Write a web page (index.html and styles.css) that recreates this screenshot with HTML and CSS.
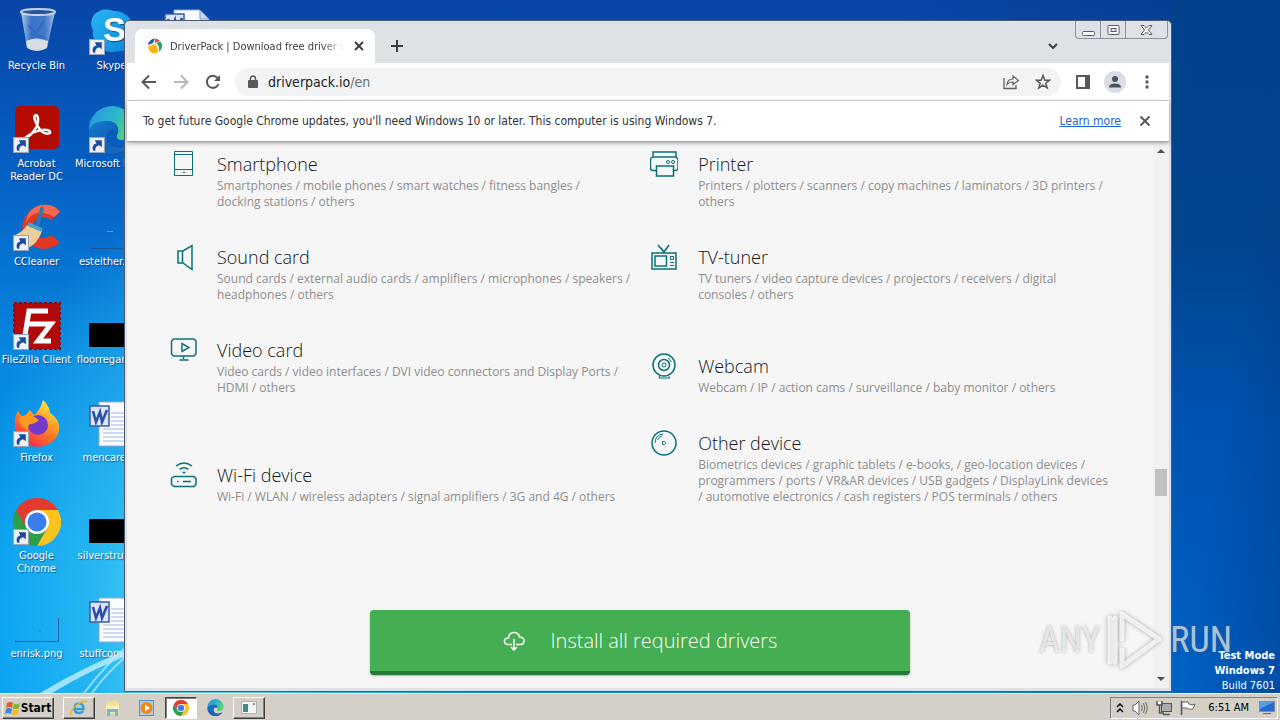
FILE: index.html
```html
<!DOCTYPE html>
<html lang="en">
<head>
    <meta charset="UTF-8">
    <meta name="viewport" content="width=device-width, initial-scale=1.0">
    <title>DriverPack | Download free driver updates</title>
    <link rel="stylesheet" href="styles.css">
</head>
<body>
    <!-- shared icon parts -->
    <svg class="defs" width="0" height="0" aria-hidden="true">
        <defs>
            <linearGradient id="g-bin" x1="0" x2="1" y1="0" y2="0"><stop offset="0" stop-color="#c4d8ee" stop-opacity=".95"/><stop offset=".3" stop-color="#4f86d4" stop-opacity=".7"/><stop offset=".7" stop-color="#5a8cd6" stop-opacity=".7"/><stop offset="1" stop-color="#b9cfea" stop-opacity=".9"/></linearGradient>
            <linearGradient id="g-skype" x1="0" x2="1" y1="0" y2="1"><stop offset="0" stop-color="#2ab6f2"/><stop offset="1" stop-color="#0a84dc"/></linearGradient>
            <linearGradient id="g-edge" x1="0" x2="1" y1=".2" y2=".6"><stop offset="0" stop-color="#2a94dc"/><stop offset=".5" stop-color="#2ab5d0"/><stop offset="1" stop-color="#5fd866"/></linearGradient>
            <linearGradient id="g-edge2" x1="0" x2="1" y1="0" y2="1"><stop offset="0" stop-color="#1478d2"/><stop offset="1" stop-color="#0f4f9c"/></linearGradient>
            <linearGradient id="g-fox" x1=".8" x2=".2" y1="0" y2="1"><stop offset="0" stop-color="#fff04a"/><stop offset=".4" stop-color="#ff9a22"/><stop offset=".75" stop-color="#ff5136"/><stop offset="1" stop-color="#e51b60"/></linearGradient>
            <symbol id="shortcut" viewBox="0 0 15 15">
                <rect x=".5" y=".5" width="14" height="14" fill="#eef2f8" stroke="#9aa6b8"/>
                <path d="M4 13C2.500 9 4 6.500 7 6L5.500 3H12V9.500L9.500 7.800C7 8.500 5.500 10 6 13Z" fill="#1c4a9c"/>
            </symbol>
            <symbol id="chrome" viewBox="0 0 48 48">
                <path d="M24 24L3.200 12A24 24 0 0 1 44.800 12Z" fill="#e33b2e"/>
                <path d="M24 12H44.800A24 24 0 0 1 24 48L34 30Z" fill="#fcc31e"/>
                <path d="M3.200 12A24 24 0 0 0 24 48L34.400 30L13.600 30Z" fill="#2d9f46"/>
                <path d="M3.200 12L13.600 30L24 24L24 12Z" fill="#e33b2e"/>
                <circle cx="24" cy="24" r="12" fill="#fff"/>
                <circle cx="24" cy="24" r="9.500" fill="#3b7ded"/>
            </symbol>
            <symbol id="edge" viewBox="0 0 48 48">
                <path d="M1 24A23 23 0 0 1 47 22C47 31 41 34 34 34C28 34 28 30 30 27C32 20 26 15 19 15C10 15 4 18 1 24Z" fill="url(#g-edge)"/>
                <path d="M1 24C4 17 12 15 19 15C27 15 31 20 30 26C26 22 18 24 18 31C18 38 26 43 37 41C40 40 43 38 44 37A23 23 0 0 1 1 24Z" fill="url(#g-edge2)"/>
                <path d="M14 46C6 36 12 22 24 23C17 25 16 34 22 39C28 43 38 42 44 37C38 47 25 50 14 46Z" fill="#1767b8"/>
            </symbol>
            <symbol id="word" viewBox="0 0 48 48">
                <path d="M11 2H37L46 11V46H11Z" fill="#fafcff" stroke="#93a7d6"/>
                <path d="M37 2V11H46Z" fill="#cfdcf5" stroke="#7690cc"/>
                <path d="M23 13H42M23 17H42M23 21H42M23 25H42M15 29H42M15 33H42M15 37H42M15 41H42" stroke="#a3b5e3"/>
                <rect x="2" y="6" width="19" height="20" fill="#dbe5f8" stroke="#3658a8" stroke-width="1.500"/>
                <path d="M5 11L8 22L12 12L14 22L19 10" fill="none" stroke="#2b50a6" stroke-width="2.600"/>
            </symbol>
        </defs>
    </svg>

    <main class="desktop">
        <svg class="beams" width="140" height="60" viewBox="0 0 140 60" aria-hidden="true"><path d="M40 60Q90 30 140 12L140 18Q95 34 52 60Z" fill="#c8f4ff" opacity=".75"/><path d="M84 60Q104 34 126 14M92 60Q108 38 128 22" fill="none" stroke="#b8f0ff" stroke-width="2" opacity=".7"/></svg>
        <div class="desktop-icons">
            <a class="shortcut" href="#">
                <svg viewBox="0 0 48 48"><path d="M8 4L14 40Q23 46 34 40L42 4Z" fill="url(#g-bin)"/><path d="M13 33Q23 28 35 33L34 40Q24 46 14 40Z" fill="#e9e7e6" opacity=".9"/><path d="M15 17L23 25L31 13M18 26L32 30" fill="none" stroke="#2a61bb" stroke-width="2" opacity=".6"/><ellipse cx="25" cy="4" rx="17" ry="3" fill="#27559e" stroke="#c6d3e4" stroke-width="2"/></svg>
                <span>Recycle Bin</span>
            </a>
            <a class="shortcut" href="#">
                <svg viewBox="0 0 48 48"><rect x="2" y="0" width="44" height="43" rx="5" fill="#b30b00"/><path d="M12 32C20 29 26 19 25 12C24 7 20 9 22 14C25 23 31 30 37 27C38 22 24 22 12 32Z" fill="none" stroke="#fff" stroke-width="2.500"/><use href="#shortcut" x="0" y="31" width="16" height="16"/></svg>
                <span>Acrobat<br>Reader DC</span>
            </a>
            <a class="shortcut" href="#">
                <svg viewBox="0 0 48 48"><path d="M47 8L38 16C28 9 19 16 20 24C21 34 31 37 38 31L47 38C38 48 20 47 12 35C4 18 16 2 30 1C38 0 43 3 47 8Z" fill="#df3926"/><path d="M47 8L41 13C28 5 16 9 13 20C13 8 22 1 30 1C38 0 43 3 47 8Z" fill="#f26a50"/><path d="M29 5L24 22" stroke="#2b79b9" stroke-width="4" stroke-linecap="round"/><path d="M14 21L29 27C26 36 20 43 12 45L2 31Q10 28 14 21Z" fill="#edcd98"/><path d="M15 20L29 26" stroke="#4da0ce" stroke-width="4"/><use href="#shortcut" x="0" y="31" width="16" height="16"/></svg>
                <span>CCleaner</span>
            </a>
            <a class="shortcut" href="#">
                <svg viewBox="0 0 48 48"><rect x="1" y="1" width="46" height="46" fill="#b20a0a" stroke="#90060a" stroke-width="2" stroke-dasharray="3 2"/><path d="M11 39L16 9H35M14 22H29M25 22H38L25 39H38" fill="none" stroke="#fff" stroke-width="5"/><use href="#shortcut" x="0" y="32" width="16" height="16"/></svg>
                <span>FileZilla Client</span>
            </a>
            <a class="shortcut" href="#">
                <svg viewBox="0 0 48 48"><path d="M5 11L10 18L17 10L21 15Q27 11 30 0C35 5 37 9 37 13C47 19 49 30 42 39C32 50 14 49 6 38C0 28 1 18 5 11Z" fill="url(#g-fox)"/><circle cx="25" cy="25" r="10" fill="#733ac9"/><path d="M6 18C12 13 19 15 23 18L26 20Q22 24 17 24Q14 26 15 30C10 28 6 24 6 18Z" fill="#ff9a20"/><use href="#shortcut" x="0" y="31" width="16" height="16"/></svg>
                <span>Firefox</span>
            </a>
            <a class="shortcut" href="#">
                <svg viewBox="0 0 48 48"><use href="#chrome"/><use href="#shortcut" x="0" y="31" width="16" height="16"/></svg>
                <span>Google<br>Chrome</span>
            </a>
            <a class="shortcut" href="#">
                <svg viewBox="0 0 48 48"><path d="M2 45.500H45.500V22" fill="none" stroke="#1a62a0"/><path d="M26 35H28" stroke="#287cc0"/></svg>
                <span>enrisk.png</span>
            </a>

            <a class="shortcut" href="#">
                <svg viewBox="0 0 48 48"><path d="M6 7C12 0 21 1 26 3C38 3 47 13 46 25C48 35 42 44 31 43C15 48 3 34 5 22C2 17 3 11 6 7Z" fill="url(#g-skype)"/><text class="skype-s" x="15" y="33">S</text><use href="#shortcut" x="1" y="31" width="16" height="16"/></svg>
                <span>Skype</span>
            </a>
            <a class="shortcut" href="#">
                <svg viewBox="0 0 48 48"><use href="#edge"/><use href="#shortcut" x="1" y="31" width="16" height="16"/></svg>
                <span>Microsoft Edge</span>
            </a>
            <a class="shortcut" href="#">
                <svg viewBox="0 0 48 48"><path d="M3 44.500H48" stroke="#155797"/><path d="M19 27.500H25" stroke="#4fa0e0"/></svg>
                <span>esteither.png</span>
            </a>
            <a class="shortcut" href="#">
                <svg viewBox="0 0 48 48"><path d="M1 21H48V45H1Z" fill="#000"/></svg>
                <span>floorregar.png</span>
            </a>
            <a class="shortcut" href="#">
                <svg viewBox="0 0 48 48"><use href="#word"/></svg>
                <span>mencare.rtf</span>
            </a>
            <a class="shortcut" href="#">
                <svg viewBox="0 0 48 48"><path d="M1 21H48V45H1Z" fill="#000"/></svg>
                <span>silverstru.png</span>
            </a>
            <a class="shortcut" href="#">
                <svg viewBox="0 0 48 48"><use href="#word"/></svg>
                <span>stuffcomp.rtf</span>
            </a>

            <a class="shortcut" href="#" aria-label="Document">
                <svg viewBox="0 0 48 48"><use href="#word"/></svg>
            </a>
        </div>

        <div class="build-info">
            <strong>Test Mode</strong>
            <strong>Windows 7</strong>
            <span>Build 7601</span>
        </div>

        <section class="window">
            <header class="tab-strip">
                <div class="tab">
                    <svg width="16" height="16" viewBox="0 0 16 16"><path d="M1 7A7.500 7.500 0 0 1 8 .5L6 5Z" fill="#1e58a8"/><path d="M8.500 .5A7.500 7.500 0 0 1 13 3L7.500 5Z" fill="#e4483a"/><path d="M13.500 3.500A7.500 7.500 0 0 1 12 14Q13 8 9 5Z" fill="#27a560"/><path d="M1 8.500L7 6Q12 9 11 14.500Q3 18 1 8.500Z" fill="#fbb615"/></svg>
                    <span class="tab-title">DriverPack | Download free driver updates</span>
                    <button class="tab-close" aria-label="Close tab"><svg width="10" height="10" viewBox="0 0 10 10"><path d="M1 1L9 9M9 1L1 9" stroke="#3c4043" stroke-width="2"/></svg></button>
                </div>
                <button class="new-tab" aria-label="New tab"><svg width="12" height="12" viewBox="0 0 12 12"><path d="M6 0V12M0 6H12" stroke="#3c4043" stroke-width="2"/></svg></button>
                <button class="tab-search" aria-label="Search tabs"><svg width="10" height="6" viewBox="0 0 10 6"><path d="M1 1L5 5L9 1" fill="none" stroke="#3c4043" stroke-width="2"/></svg></button>
                <div class="window-controls">
                    <button aria-label="Minimize"><svg width="13" height="12" viewBox="0 0 13 12"><rect x=".5" y="7.500" width="12" height="4" rx="1" fill="#fff" stroke="#555b66"/></svg></button>
                    <button aria-label="Restore"><svg width="13" height="12" viewBox="0 0 13 12"><rect x="1" y="1.500" width="11" height="9" rx="1" fill="#fff" stroke="#555b66"/><rect x="4" y="4.500" width="5" height="3" fill="#dee1e6" stroke="#555b66"/></svg></button>
                    <button class="close" aria-label="Close"><svg width="13" height="12" viewBox="0 0 13 12"><path d="M1 1.500H4L6.500 4L9 1.500H12L8.500 6L12 10.500H9L6.500 8L4 10.500H1L4.500 6Z" fill="#fff" stroke="#555b66"/></svg></button>
                </div>
            </header>

            <div class="toolbar">
                <button class="tool" aria-label="Back"><svg width="16" height="16" viewBox="0 0 16 16"><path d="M15 8H2M8 1.500L1.500 8L8 14.500" fill="none" stroke="#55585c" stroke-width="2"/></svg></button>
                <button class="tool" aria-label="Forward"><svg width="16" height="16" viewBox="0 0 16 16"><path d="M1 8H14M8 1.500L14.500 8L8 14.500" fill="none" stroke="#b6b8bb" stroke-width="2"/></svg></button>
                <button class="tool" aria-label="Reload"><svg width="16" height="16" viewBox="0 0 16 16"><path d="M13.500 10A6 6 0 1 1 12.500 4" fill="none" stroke="#55585c" stroke-width="2"/><path d="M15 1V7H9Z" fill="#55585c"/></svg></button>
                <div class="address">
                    <svg width="10" height="14" viewBox="0 0 10 14"><rect x="0" y="5" width="10" height="8" rx="1" fill="#55585c"/><path d="M2.500 6V3.500A2.500 2.500 0 0 1 7.500 3.500V6" fill="none" stroke="#55585c" stroke-width="1.500"/></svg>
                    <a class="url" href="#">driverpack.io<span>/en</span></a>
                    <button class="tool" aria-label="Share"><svg width="16" height="16" viewBox="0 0 16 16"><path d="M1 4V14.500H13V11" fill="none" stroke="#5f6368" stroke-width="1.300"/><path d="M4 10.500Q4.500 5 10 5V2L15.500 6.500L10 10.500V8Q6 8 4 10.500Z" fill="none" stroke="#5f6368" stroke-width="1.200"/></svg></button>
                    <button class="tool" aria-label="Bookmark"><svg width="16" height="16" viewBox="0 0 16 16"><path d="M8 1.500L9.800 6.200H14.500L10.800 9.200L12.200 14L8 11.200L3.800 14L5.200 9.200L1.500 6.200H6.200Z" fill="none" stroke="#55585c" stroke-width="1.500"/></svg></button>
                </div>
                <button class="tool" aria-label="Side panel"><svg width="14" height="14" viewBox="0 0 14 14"><path d="M1 1H13V13H1Z" fill="#fff" stroke="#55585c" stroke-width="2"/><path d="M9 1H13V13H9Z" fill="#55585c"/></svg></button>
                <button class="tool" aria-label="Profile"><svg width="22" height="22" viewBox="0 0 22 22"><circle cx="11" cy="11" r="11" fill="#dadde3"/><circle cx="11" cy="8" r="3" fill="#4a5160"/><path d="M5 16.500V15.500Q6 12.500 11 12.500Q16 12.500 17 15.500V16.500Z" fill="#4a5160"/></svg></button>
                <button class="tool" aria-label="Menu"><svg width="4" height="14" viewBox="0 0 4 14"><path d="M.5 .5H3.500V3.500H.5ZM.5 5.500H3.500V8.500H.5ZM.5 10.500H3.500V13.500H.5Z" fill="#55585c"/></svg></button>
            </div>

            <div class="infobar">
                <p>To get future Google Chrome updates, you'll need Windows 10 or later. This computer is using Windows 7.</p>
                <a href="#">Learn more</a>
                <button aria-label="Dismiss"><svg width="12" height="12" viewBox="0 0 12 12"><path d="M1.500 1.500L10.500 10.500M10.500 1.500L1.500 10.500" stroke="#55585c" stroke-width="2"/></svg></button>
            </div>

            <div class="viewport">
                <article class="page">
                    <div class="devices">
                        <div class="device-column">
                            <section class="device">
                                <svg viewBox="0 0 28 28"><path d="M5.500 1.500H23.500V25.500H5.500ZM5.500 4.500H23.500M5.500 19.500H23.500M14 22.500H16"/></svg>
                                <div>
                                    <h2>Smartphone</h2>
                                    <p>Smartphones / mobile phones / smart watches / fitness bangles /<br>docking stations / others</p>
                                </div>
                            </section>
                            <section class="device">
                                <svg viewBox="0 0 28 28"><path class="bold" d="M9 8H14L23 2.500V26.500L14 20H9ZM13.500 8V20"/></svg>
                                <div>
                                    <h2>Sound card</h2>
                                    <p>Sound cards / external audio cards / amplifiers / microphones / speakers /<br>headphones / others</p>
                                </div>
                            </section>
                            <section class="device rows-4">
                                <svg viewBox="0 0 28 28"><path class="bold" d="M4.500 3H25L27 5V18L25 20H4.500L2.500 18V5ZM14.500 20V23M10.500 24H19.500M13 7.500V15.500L20 11.500Z"/></svg>
                                <div>
                                    <h2>Video card</h2>
                                    <p>Video cards / video interfaces / DVI video connectors and Display Ports /<br>HDMI / others</p>
                                </div>
                            </section>
                            <section class="device">
                                <svg viewBox="0 0 28 28"><path class="bold" d="M5 15.500H25L27 17.500V23.500L25 25.500H5L2.500 23.500V17.500ZM14 20.500H22M8 20.500H9.500M7 5Q15 -1 23 5M10.500 8.500Q15 5 19.500 8.500M13.500 11.500H16.500"/></svg>
                                <div>
                                    <h2>Wi-Fi device</h2>
                                    <p>Wi-Fi / WLAN / wireless adapters / signal amplifiers / 3G and 4G / others</p>
                                </div>
                            </section>
                        </div>
                        <div class="device-column">
                            <section class="device">
                                <svg viewBox="0 0 28 28"><path class="bold" d="M2.500 7H26L28 9V19L26 20.500H23.500M6.500 20.500H2L.5 19V8.500L2.500 7M3 7V2H26V7M6.500 16H23.500V26H6.500Z"/><circle cx="18" cy="12" r="1.500"/><circle cx="23" cy="12" r="1.500"/></svg>
                                <div>
                                    <h2>Printer</h2>
                                    <p>Printers / plotters / scanners / copy machines / laminators / 3D printers /<br>others</p>
                                </div>
                            </section>
                            <section class="device rows-3">
                                <svg viewBox="0 0 28 28"><path class="bold" d="M2 10H26V26H2ZM5 13H16.500V23H5ZM8 2L14 9L19 2M11 5L14 9L16 6"/><path d="M20.500 13.500H23.500V16.500H20.500ZM20 19.500H24M20 22.500H24"/></svg>
                                <div>
                                    <h2>TV-tuner</h2>
                                    <p>TV tuners / video capture devices / projectors / receivers / digital<br>consoles / others</p>
                                </div>
                            </section>
                            <section class="device">
                                <svg viewBox="0 0 28 28"><path class="bold" d="M3 13A11 11 0 0 1 25 13A11 11 0 0 1 3 13ZM8.500 13A5.500 5.500 0 0 1 19.500 13A5.500 5.500 0 0 1 8.500 13Z"/><circle cx="14" cy="13" r="2"/><path d="M18 6Q20.500 7.500 21 10M10 23L9 26H20L18 23"/></svg>
                                <div>
                                    <h2>Webcam</h2>
                                    <p>Webcam / IP / action cams / surveillance / baby monitor / others</p>
                                </div>
                            </section>
                            <section class="device">
                                <svg viewBox="0 0 28 28"><path class="bold" d="M2 14A12 12 0 0 1 26 14A12 12 0 0 1 2 14Z"/><path d="M12.500 12.500H14.500L15.500 13.500V14.500L14.500 15.500H12.500ZM5 14Q5 6 13 5M7.500 11Q9 7.500 12 7"/></svg>
                                <div>
                                    <h2>Other device</h2>
                                    <p>Biometrics devices / graphic tablets / e-books, / geo-location devices /<br>programmers / ports / VR&amp;AR devices / USB gadgets / DisplayLink devices<br>/ automotive electronics / cash registers / POS terminals / others</p>
                                </div>
                            </section>
                        </div>
                    </div>
                    <button class="install">
                        <svg width="22" height="22" viewBox="0 0 22 22"><path d="M9 14.500H5Q1 14 1.500 10.500Q2 8 5.500 8Q6 2.500 11 2.500Q15.500 2.500 16.500 7Q21 7 21 11Q21 14.500 17 14.500H13M11 9V20M8 17L11 20L14 17"/></svg>
                        Install all required drivers
                    </button>
                </article>
                <div class="scrollbar">
                    <svg width="8" height="4" viewBox="0 0 8 4"><path d="M0 4L4 0L8 4Z" fill="#505050"/></svg>
                    <div class="track"><div class="thumb"></div></div>
                    <svg width="8" height="4" viewBox="0 0 8 4"><path d="M0 0L4 4L8 0Z" fill="#505050"/></svg>
                </div>
            </div>
        </section>

        <div class="watermark">
            <span>ANY</span>
            <svg width="60" height="64" viewBox="0 0 60 64"><path d="M5 54V10M10 54V10M17 31V6L54 31L17 58V42" fill="none" stroke-width="5" stroke-linejoin="round" stroke-linecap="round"/></svg>
            <span>RUN</span>
        </div>
    </main>

    <footer class="taskbar">
        <button class="start"><svg width="16" height="16" viewBox="0 0 16 16"><path d="M2 3Q5 1 8 3L7 8Q4 6 1 8Z" fill="#e85a24"/><path d="M9 3.500Q12 5 15 3L14 8Q11 10 8 8.500Z" fill="#7cb82f"/><path d="M1 9Q4 7 7 9L6 14Q3 12 0 14Z" fill="#3b86d6"/><path d="M8 9.500Q11 11 14 9L13 14Q10 16 7 14.500Z" fill="#f6bb1b"/></svg>Start</button>
        <nav class="tasks">
            <button class="task open" aria-label="Internet Explorer"><svg width="18" height="18" viewBox="0 0 18 18"><path d="M4.500 10H13.500Q13.500 4.500 9 4.500Q4.500 4.500 4.500 10Q5 14 9 14Q12 14 13 12" fill="none" stroke="#2f9fdd" stroke-width="2.500"/><path d="M1 16Q-1 12 7 6Q15 0 17 3" fill="none" stroke="#edb62a" stroke-width="1.500"/></svg></button>
            <button class="task" aria-label="Explorer"><svg width="18" height="18" viewBox="0 0 18 18"><path d="M2 4L6 2H13L15 4V15H2Z" fill="#f4df8e"/><path d="M2 6H15V10H2Z" fill="#fbf0bd"/><path d="M3 17V10H14V17H11V13H6V17Z" fill="#74b5dc"/></svg></button>
            <button class="task" aria-label="Media Player"><svg width="18" height="18" viewBox="0 0 18 18"><rect x="1.500" y="1.500" width="14" height="15" fill="#a9cdec" stroke="#5293c8"/><circle cx="8.500" cy="9" r="6" fill="#f28517"/><path d="M7 5.500L12 9L7 12.500Z" fill="#fff"/></svg></button>
            <button class="task active" aria-label="Chrome"><svg width="16" height="16"><use href="#chrome"/></svg></button>
            <button class="task" aria-label="Edge"><svg width="17" height="17"><use href="#edge"/></svg></button>
            <button class="task open" aria-label="Application"><svg width="16" height="14" viewBox="0 0 16 14"><rect x=".5" y=".5" width="15" height="12" fill="#f4f7f8" stroke="#aab2ba"/><rect x="2" y="3" width="5" height="8" fill="#3f8d7c"/><rect x="12" y="2" width="2" height="2" fill="#889099"/></svg></button>
        </nav>
        <div class="tray">
            <svg width="8" height="10" viewBox="0 0 8 10"><path d="M1 4L4 1L7 4M1 9L4 6L7 9" fill="none" stroke="#000" stroke-width="1.500"/></svg>
            <svg width="16" height="16" viewBox="0 0 16 16"><path d="M1 5H3L7 1V15L3 11H1Z" fill="#fff" stroke="#666"/><path d="M9.500 5Q11 8 9.500 11M11.500 3Q14 8 11.500 13M13.500 2Q17 8 13.500 14" fill="none" stroke="#666"/></svg>
            <svg width="16" height="16" viewBox="0 0 16 16"><rect x="5.500" y="3.500" width="10" height="8" fill="#aaa" stroke="#555"/><path d="M1 1V5H6V1M3.500 5V13H8M7 14.500H14" fill="none" stroke="#555" stroke-width="1.500"/><path d="M2 2H5V4H2Z" fill="#fff"/></svg>
            <svg width="16" height="16" viewBox="0 0 16 16"><path d="M1.500 15V1" stroke="#555" stroke-width="1.500"/><path d="M2 2H8L9 4Q12 6 15 4L13 9Q9 10 7 8H2Z" fill="#fff" stroke="#666"/></svg>
            <time>6:51 AM</time>
            <svg width="16" height="14" viewBox="0 0 16 14"><rect x=".5" y=".5" width="15" height="10" fill="#2469cf" stroke="#7e8fa8"/><path d="M1 1H15L1 8Z" fill="#5c9be6"/><path d="M4 12.500H12" stroke="#596779"/></svg>
        </div>
    </footer>
</body>
</html>
```
FILE: styles.css
```css
* {
    box-sizing: border-box;
}
body {
    margin: 0;
    height: 100vh;
    display: flex;
    flex-direction: column;
    overflow: hidden;
    font-family: "DejaVu Sans Condensed", "Noto Sans", sans-serif;
    font-size: 11px;
}
h2, p {
    margin: 0;
}
button {
    border: none;
    padding: 0;
    background: none;
    font-family: inherit;
    font-size: inherit;
    display: flex;
    align-items: center;
    justify-content: center;
}
svg {
    flex: none;
}
.defs {
    position: absolute;
}

/* desktop */
.desktop {
    flex: 1;
    min-height: 0;
    position: relative;
    overflow: hidden;
    background:
        radial-gradient(ellipse 260px 420px at 220px 620px, #5ee0f6 0%, rgba(50, 190, 242, 0.75) 50%, rgba(0, 140, 230, 0) 100%),
        linear-gradient(to right, transparent 70%, rgba(0, 48, 120, 0.5) 100%),
        linear-gradient(to bottom, #0845a6 0%, #0660c4 25%, #0688e0 52%, #049cf0 80%, #009cf4 100%);
}
.desktop::after {
    content: "";
    position: absolute;
    top: 0;
    right: 0;
    bottom: 0;
    width: 108px;
    background:
        linear-gradient(100deg, transparent 55%, rgba(0, 30, 90, 0.3)),
        linear-gradient(to bottom, #02418c 0%, #01458f 35%, #0052b0 60%, #0062c6 100%);
}
.beams {
    position: absolute;
    left: 0;
    bottom: 0;
}
.desktop-icons {
    height: 100%;
    margin-left: -1px;
    padding-top: 8px;
    display: grid;
    grid-auto-flow: column;
    grid-template-rows: repeat(7, 98px);
    grid-auto-columns: 75px;
    justify-content: start;
}
.shortcut {
    display: flex;
    flex-direction: column;
    align-items: center;
    gap: 3px;
    color: #fff;
    text-align: center;
    line-height: 13px;
    white-space: nowrap;
    text-decoration: none;
    text-shadow: 1px 1px 1px rgba(0, 30, 80, 0.6);
}
.shortcut svg {
    width: 48px;
    height: 48px;
}
.skype-s {
    font: bold 34px "Liberation Sans", sans-serif;
    fill: #fff;
}
.build-info {
    position: absolute;
    right: 5px;
    bottom: 0;
    z-index: 1;
    display: flex;
    flex-direction: column;
    align-items: flex-end;
    color: #fff;
    line-height: 15px;
}

/* browser window */
.window {
    position: absolute;
    top: 20px;
    right: 108px;
    bottom: 1px;
    left: 124px;
    z-index: 2;
    display: flex;
    flex-direction: column;
    padding: 0 2px 3px;
    background: #dee1e6;
    border: 1px solid #4a5a70;
    border-radius: 5px 5px 0 0;
}
.tab-strip {
    flex: none;
    height: 42px;
    display: flex;
    align-items: flex-end;
    padding: 0 1px 0 8px;
}
.tab {
    width: 240px;
    height: 34px;
    display: flex;
    align-items: center;
    gap: 7px;
    padding: 0 8px 0 12px;
    background: #fff;
    border-radius: 8px 8px 0 0;
    color: #3c4043;
}
.tab-title {
    flex: 1;
    overflow: hidden;
    white-space: nowrap;
    mask-image: linear-gradient(to right, #000 88%, transparent);
}
.tab-close {
    width: 16px;
    height: 16px;
}
.new-tab {
    width: 28px;
    height: 34px;
    margin-left: 8px;
}
.tab-search {
    width: 24px;
    height: 34px;
    margin-left: auto;
    margin-right: 10px;
}
.window-controls {
    align-self: flex-start;
    display: flex;
    border: 1px solid #8a909c;
    border-top: none;
    border-radius: 0 0 4px 4px;
}
.window-controls button {
    width: 25px;
    height: 17px;
    border-right: 1px solid #8a909c;
}
.window-controls .close {
    width: 41px;
    border-right: none;
}
.toolbar {
    flex: none;
    height: 38px;
    display: flex;
    align-items: center;
    gap: 4px;
    padding: 0 8px;
    background: #fff;
    border-bottom: 1px solid #d5d7da;
}
.tool {
    width: 28px;
    height: 28px;
}
.address {
    flex: 1;
    height: 28px;
    display: flex;
    align-items: center;
    gap: 4px;
    margin: 0 4px;
    padding: 0 4px 0 13px;
    background: #f1f3f4;
    border-radius: 14px;
}
.url {
    flex: 1;
    margin-left: 6px;
    font-size: 14px;
    color: #202124;
    text-decoration: none;
}
.url span {
    color: #6a6e73;
}
.infobar {
    flex: none;
    height: 41px;
    display: flex;
    align-items: center;
    gap: 16px;
    padding: 0 16px;
    background: #fff;
    border-bottom: 1px solid #a4a6a8;
    box-shadow: 0 1px 4px rgba(0, 0, 0, 0.35);
    z-index: 1;
    font-size: 12px;
    color: #303236;
}
.infobar p {
    flex: 1;
}
.infobar a {
    color: #1a66d0;
}
.infobar button {
    width: 16px;
    height: 16px;
}
.viewport {
    flex: 1;
    min-height: 0;
    display: flex;
    background: #f6f6f6;
}

/* web page */
.page {
    flex: 1;
    overflow: hidden;
    padding-top: 8px;
    font-family: "Open Sans", "Noto Sans", sans-serif;
    font-weight: 300;
}
.devices {
    width: 92%;
    max-width: 942px;
    margin: 0 auto;
    display: grid;
    grid-template-columns: 1fr 1fr;
    gap: 20px;
}
.device-column {
    display: flex;
    flex-direction: column;
    gap: 33px;
}
.device {
    display: flex;
    gap: 20px;
}
.device svg {
    width: 28px;
    height: 28px;
    fill: none;
    stroke: #0b7177;
}
.device .bold {
    stroke-width: 1.5;
}
.device h2 {
    font-size: 18px;
    font-weight: 300;
    line-height: 28px;
    color: #111520;
}
.device p {
    font-size: 12px;
    font-weight: 400;
    line-height: 16px;
    white-space: nowrap;
    color: #8e8e8e;
}
.rows-3 p {
    min-height: 48px;
}
.rows-4 p {
    min-height: 64px;
}
.install {
    width: 540px;
    max-width: 90%;
    height: 65px;
    margin: 105px auto 0;
    gap: 26px;
    background: #45ad52;
    border-bottom: 4px solid #267a3b;
    border-radius: 4px;
    box-shadow: 0 1px 2px rgba(0, 0, 0, 0.3);
    color: #fff;
    font-size: 20px;
    font-weight: 300;
}
.install svg {
    fill: none;
    stroke: #fff;
    stroke-width: 1.5;
}
.scrollbar {
    width: 16px;
    display: flex;
    flex-direction: column;
    align-items: center;
    padding: 7px 0;
    background: #f1f1f1;
}
.track {
    flex: 1;
    width: 12px;
    display: flex;
    flex-direction: column;
}
.track::before {
    content: "";
    flex: 316;
}
.track::after {
    content: "";
    flex: 181;
}
.thumb {
    height: 27px;
    background: #c1c1c1;
}

.watermark {
    position: absolute;
    right: 48px;
    bottom: 21px;
    z-index: 3;
    display: flex;
    align-items: center;
    gap: 5px;
    font-family: "Liberation Sans Narrow", "Roboto Condensed", "DejaVu Sans Condensed", sans-serif;
    font-size: 36px;
    line-height: 64px;
    color: rgba(255, 255, 255, 0.65);
    text-shadow: 0 0 3px rgba(90, 90, 90, 0.5);
}
.watermark svg {
    stroke: rgba(255, 255, 255, 0.75);
    filter: drop-shadow(0 0 2px rgba(80, 80, 80, 0.6));
}

/* taskbar */
.taskbar {
    flex: none;
    height: 27px;
    display: flex;
    align-items: center;
    gap: 9px;
    padding: 2px 2px 1px;
    background: #d4d0c8;
    border-top: 1px solid #fff;
}
.start, .task.open, .task.active {
    border: 1px solid;
    border-color: #fff #404040 #404040 #fff;
    box-shadow: inset -1px -1px 0 #808080;
}
.start {
    width: 52px;
    height: 22px;
    font-size: 12px;
    font-weight: bold;
}
.tasks {
    flex: 1;
    display: flex;
    gap: 2px;
}
.task {
    width: 32px;
    height: 22px;
}
.task.active {
    background: #fff;
    border-color: #404040 #fff #fff #404040;
    box-shadow: inset 1px 1px 0 #808080;
}
.tray {
    height: 22px;
    display: flex;
    align-items: center;
    gap: 8px;
    padding: 0 2px 0 5px;
    border: 1px solid;
    border-color: #808080 #fff #fff #808080;
}
.tray time {
    margin: 0 2px 0 4px;
    font-size: 11px;
}
```
